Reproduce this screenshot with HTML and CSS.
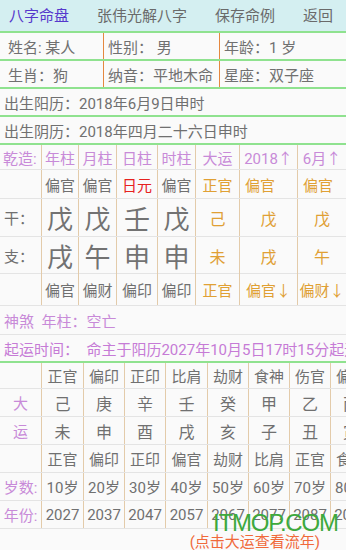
FILE: index.html
```html
<!DOCTYPE html>
<html lang="zh">
<head>
<meta charset="utf-8">
<link rel="stylesheet" href="styles.css">
</head>
<body>
<nav class="topbar">
  <span class="tab active">八字命盘</span>
  <span class="tab">张伟光解八字</span>
  <span class="tab">保存命例</span>
  <span class="tab">返回</span>
</nav>

<div class="info-row">
  <div class="info-cell">姓名: 某人</div>
  <div class="info-cell">性别：&nbsp;男</div>
  <div class="info-cell">年龄：1 岁</div>
</div>
<div class="info-row">
  <div class="info-cell">生肖：狗</div>
  <div class="info-cell">纳音：平地木命</div>
  <div class="info-cell">星座：双子座</div>
</div>
<div class="line-row">出生阳历：2018年6月9日申时</div>
<div class="line-row">出生阴历：2018年四月二十六日申时</div>

<section class="pillars">
  <div class="p-row h-head">
    <div class="pc label purple">乾造:</div>
    <div class="pc purple">年柱</div>
    <div class="pc purple">月柱</div>
    <div class="pc purple">日柱</div>
    <div class="pc purple">时柱</div>
    <div class="pc purple">大运</div>
    <div class="pc purple">2018↑</div>
    <div class="pc purple">6月↑</div>
  </div>
  <div class="p-row h-god">
    <div class="pc label"></div>
    <div class="pc">偏官</div>
    <div class="pc">偏官</div>
    <div class="pc red">日元</div>
    <div class="pc">偏官</div>
    <div class="pc orange">正官</div>
    <div class="pc orange left">偏官</div>
    <div class="pc orange left">偏官</div>
  </div>
  <div class="p-row h-stem">
    <div class="pc label">干：</div>
    <div class="pc big">戊</div>
    <div class="pc big">戊</div>
    <div class="pc big">壬</div>
    <div class="pc big">戊</div>
    <div class="pc orange mid">己</div>
    <div class="pc orange mid">戊</div>
    <div class="pc orange mid">戊</div>
  </div>
  <div class="p-row h-branch">
    <div class="pc label">支：</div>
    <div class="pc big">戌</div>
    <div class="pc big">午</div>
    <div class="pc big">申</div>
    <div class="pc big">申</div>
    <div class="pc orange mid">未</div>
    <div class="pc orange mid">戌</div>
    <div class="pc orange mid">午</div>
  </div>
  <div class="p-row h-hidden">
    <div class="pc label"></div>
    <div class="pc">偏官</div>
    <div class="pc">偏财</div>
    <div class="pc">偏印</div>
    <div class="pc">偏印</div>
    <div class="pc orange">正官</div>
    <div class="pc orange">偏官↓</div>
    <div class="pc orange">偏财↓</div>
  </div>
</section>

<div class="plain-row purple">神煞&nbsp;&nbsp;年柱：空亡</div>
<div class="line-row start-row purple">起运时间：&nbsp;&nbsp;命主于阳历2027年10月5日17时15分起运</div>

<section class="dayun">
  <div class="d-row d-first">
    <div class="dc"></div>
    <div class="dc">正官</div><div class="dc">偏印</div><div class="dc">正印</div><div class="dc">比肩</div>
    <div class="dc">劫财</div><div class="dc">食神</div><div class="dc">伤官</div><div class="dc">偏财</div>
  </div>
  <div class="d-row">
    <div class="dc purple">大</div>
    <div class="dc mid">己</div><div class="dc mid">庚</div><div class="dc mid">辛</div><div class="dc mid">壬</div>
    <div class="dc mid">癸</div><div class="dc mid">甲</div><div class="dc mid">乙</div><div class="dc mid">丙</div>
  </div>
  <div class="d-row">
    <div class="dc purple">运</div>
    <div class="dc mid">未</div><div class="dc mid">申</div><div class="dc mid">酉</div><div class="dc mid">戌</div>
    <div class="dc mid">亥</div><div class="dc mid">子</div><div class="dc mid">丑</div><div class="dc mid">寅</div>
  </div>
  <div class="d-row">
    <div class="dc"></div>
    <div class="dc">正官</div><div class="dc">偏印</div><div class="dc">正印</div><div class="dc">偏官</div>
    <div class="dc">劫财</div><div class="dc">比肩</div><div class="dc">正官</div><div class="dc">食神</div>
  </div>
  <div class="d-row">
    <div class="dc purple">岁数:</div>
    <div class="dc">10岁</div><div class="dc">20岁</div><div class="dc">30岁</div><div class="dc">40岁</div>
    <div class="dc">50岁</div><div class="dc">60岁</div><div class="dc">70岁</div><div class="dc">80岁</div>
  </div>
  <div class="d-row">
    <div class="dc purple">年份:</div>
    <div class="dc">2027</div><div class="dc">2037</div><div class="dc">2047</div><div class="dc">2057</div>
    <div class="dc">2067</div><div class="dc">2077</div><div class="dc">2087</div><div class="dc">2097</div>
  </div>
</section>

<div class="hint">(点击大运查看流年)</div>

<div class="watermark">ITMOP.COM</div>
</body>
</html>
```

FILE: styles.css
```css
* {
  box-sizing: border-box;
  margin: 0;
  padding: 0;
}

html, body {
  width: 346px;
  height: 550px;
  overflow: hidden;
}

body {
  position: relative;
  background: #fafafa;
  font-family: Roboto, "Noto Sans CJK SC", sans-serif;
  font-size: 15px;
  color: #707070;
}

.purple { color: #c88ad8; }
.orange { color: #e0a034; }
.red { color: #e6221f; }

/* top navigation */
.topbar {
  height: 33px;
  background: #d4eff1;
  border-bottom: 2px solid #8fe28f;
  display: flex;
  align-items: center;
  gap: 28px;
  padding: 0 0 2px 9px;
  color: #6a6a6a;
  white-space: nowrap;
}

.topbar .active { color: #5638cc; }

/* info rows */
.info-row {
  display: grid;
  grid-template-columns: 103px 116px 1fr;
  height: 28px;
  border-bottom: 2px solid #8fe28f;
}

.info-cell {
  display: flex;
  align-items: center;
  padding-left: 4px;
  white-space: nowrap;
}

.info-cell:first-child { padding-left: 8px; }
.info-cell + .info-cell { border-left: 1px solid #e5883f; }

.line-row {
  height: 28px;
  display: flex;
  align-items: center;
  padding-left: 4px;
  border-bottom: 2px solid #8fe28f;
  white-space: nowrap;
  overflow: hidden;
}

.plain-row {
  height: 29px;
  display: flex;
  align-items: center;
  padding-left: 4px;
  border-bottom: 1px solid #e4e4e4;
  white-space: nowrap;
}

.start-row { color: #c67bd6; }

/* four pillars table */
.p-row {
  display: grid;
  grid-template-columns: 41px 37px 38px 41px 38px 44px 58px 49px;
  border-bottom: 1px solid #e4e4e4;
}

.h-head { height: 25px; }
.h-god { height: 29px; }
.h-stem { height: 38px; }
.h-branch { height: 37px; }
.h-hidden { height: 32px; }

.pc {
  display: flex;
  align-items: center;
  justify-content: center;
  white-space: nowrap;
}

.pc + .pc { border-left: 1px solid #e3cbaa; }

.pc.label {
  justify-content: flex-start;
  padding-left: 4px;
}

.h-head .pc.label { padding-left: 3px; }

.pc.left {
  justify-content: flex-start;
  padding-left: 5px;
}

.pc.big {
  font-size: 26px;
  color: #727272;
}

.pc.mid { font-size: 16px; }

/* da yun table */
.dayun { overflow: hidden; }

.d-row {
  display: grid;
  grid-template-columns: 41px 42px 41px 41px 42px 41px 41px 41px 41px;
  width: 371px;
  height: 28px;
  border-bottom: 1px solid #e4e4e4;
}

.d-row.d-first { height: 26px; }

.dc {
  display: flex;
  align-items: center;
  justify-content: center;
  white-space: nowrap;
}

.dc + .dc { border-left: 1px solid #e3cbaa; }

.dc.mid { font-size: 16px; }

.hint {
  height: 22px;
  display: flex;
  align-items: center;
  justify-content: flex-end;
  padding-right: 26px;
  color: #f0693a;
  white-space: nowrap;
}

.watermark {
  position: absolute;
  left: 213px;
  top: 509px;
  font-family: "Liberation Sans", Arial, sans-serif;
  font-size: 24px;
  letter-spacing: -1.2px;
  color: #3da93d;
  white-space: nowrap;
}
```
